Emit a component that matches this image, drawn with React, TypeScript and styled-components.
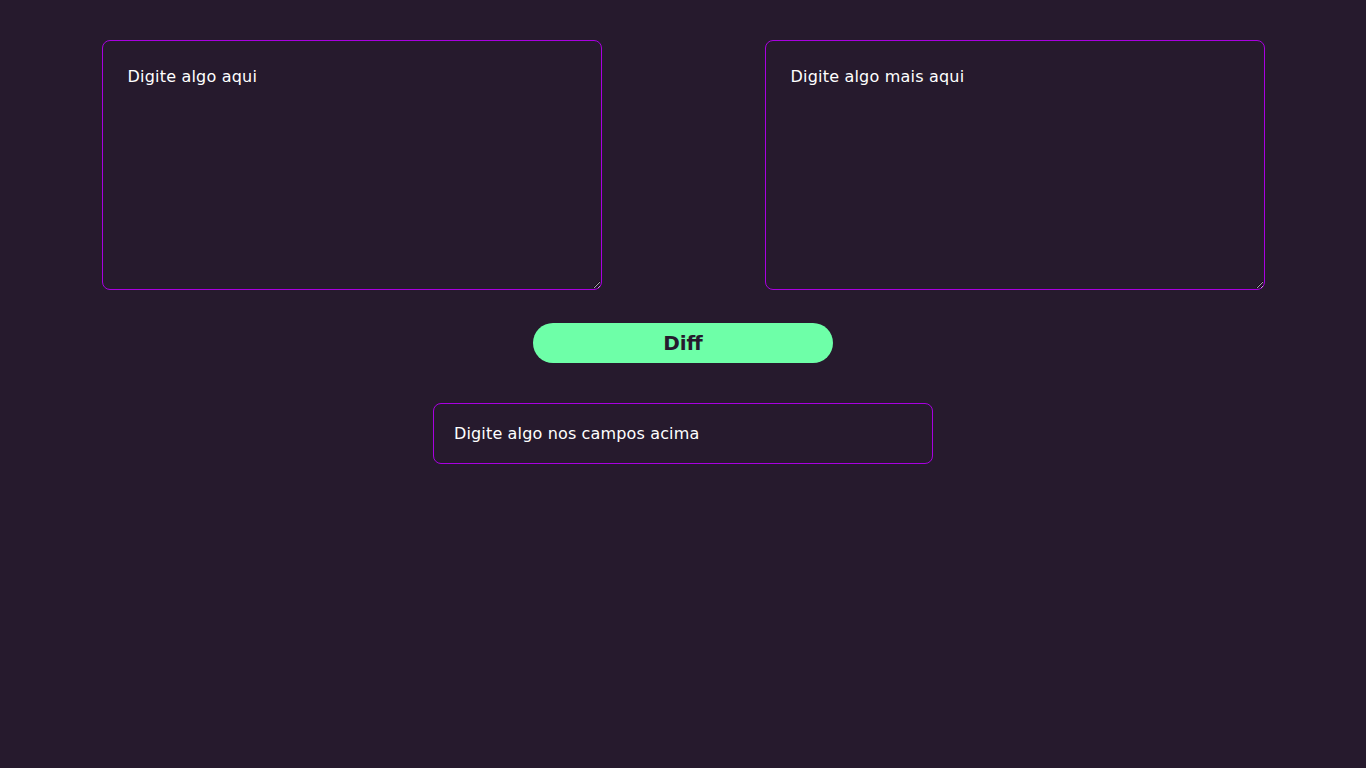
import React, { useState } from "react";
import styled, { createGlobalStyle } from "styled-components";

const Global = createGlobalStyle`
  html, body { margin: 0; padding: 0; background: #261a2d; }
  body { font-family: "DejaVu Sans", "Open Sans", sans-serif; color: #ffffff; }
  * { box-sizing: border-box; }
`;

const Page = styled.main`
  min-height: 768px;
  padding-top: 40px;
  display: flex;
  flex-direction: column;
  align-items: center;
`;

const Inputs = styled.div`
  display: flex;
  gap: 163px;
`;

const Area = styled.textarea`
  width: 500px;
  height: 250px;
  padding: 25px 25px;
  background: #261a2d;
  border: 1px solid #a800e0;
  border-radius: 8px;
  color: #ffffff;
  font-family: inherit;
  font-size: 16px;
  line-height: 22px;
  letter-spacing: 0.2px;
  outline: none;
  &::placeholder { color: #ffffff; opacity: 1; }
`;

const DiffButton = styled.button`
  margin-top: 33px;
  width: 300px;
  height: 40px;
  border: none;
  border-radius: 20px;
  background: #6effa8;
  color: #261a2d;
  font-family: inherit;
  font-weight: 700;
  font-size: 20px;
  cursor: pointer;
`;

const Output = styled.div`
  margin-top: 40px;
  width: 500px;
  height: 61px;
  padding: 0 20px;
  display: flex;
  align-items: center;
  border: 1px solid #a800e0;
  border-radius: 8px;
  font-size: 16px;
  letter-spacing: 0.15px;
`;

export default function App() {
  const [a, setA] = useState("");
  const [b, setB] = useState("");
  return (
    <>
      <Global />
      <Page>
        <Inputs>
          <Area placeholder="Digite algo aqui" value={a} onChange={(e) => setA(e.target.value)} />
          <Area placeholder="Digite algo mais aqui" value={b} onChange={(e) => setB(e.target.value)} />
        </Inputs>
        <DiffButton>Diff</DiffButton>
        <Output>Digite algo nos campos acima</Output>
      </Page>
    </>
  );
}
